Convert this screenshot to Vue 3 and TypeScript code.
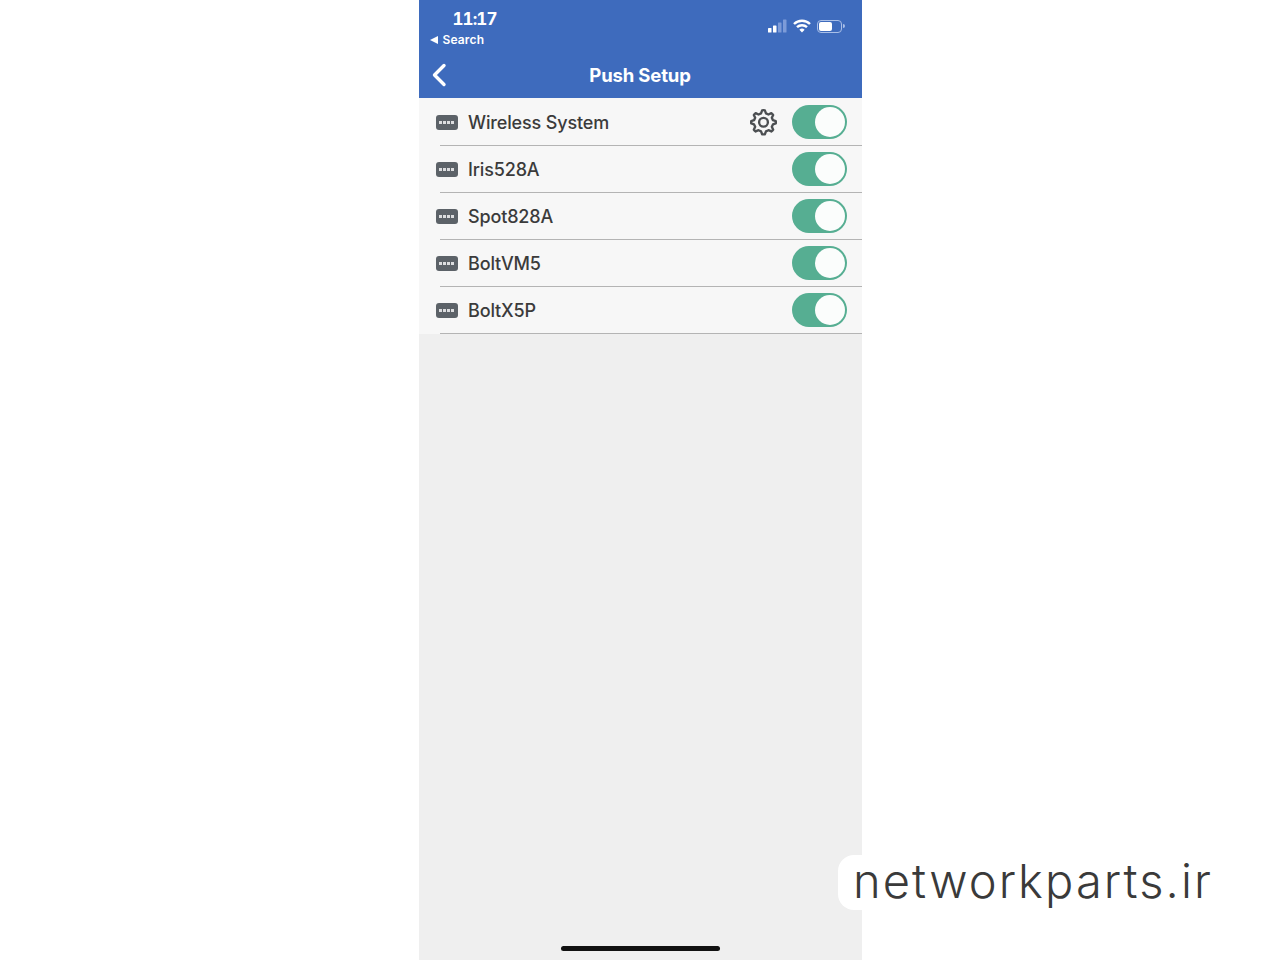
<script setup lang="ts">
import { ref } from "vue";

const devices = ref([
  { name: "Wireless System", gear: true },
  { name: "Iris528A", gear: false },
  { name: "Spot828A", gear: false },
  { name: "BoltVM5", gear: false },
  { name: "BoltX5P", gear: false },
]);

const gearPath =
  "M10.8 1.6 Q12 1.2 13.2 1.6 L14.2 4.3 L16.4 5.3 L19 4.1 Q20 4.8 20.6 5.8 L19.4 8.2 L20.4 10.4 L22.9 11.2 Q23.1 12.4 22.9 13.3 L20.4 14.2 L19.4 16.3 L20.6 18.8 Q20 19.8 19 20.4 L16.4 19.3 L14.2 20.3 L13.2 22.9 Q12 23.2 10.8 22.9 L9.8 20.3 L7.6 19.3 L5 20.4 Q4 19.8 3.4 18.8 L4.6 16.3 L3.6 14.2 L1.1 13.3 Q0.9 12.4 1.1 11.2 L3.6 10.4 L4.6 8.2 L3.4 5.8 Q4 4.8 5 4.1 L7.6 5.3 L9.8 4.3 Z";
</script>

<template>
  <div class="page">
    <div class="phone">
      <header class="header">
        <div class="status">
          <div class="status-left">
            <div class="time">11:17</div>
            <div class="back-app"><span class="back-tri"></span>Search</div>
          </div>
          <div class="status-right">
            <svg class="signal" width="20" height="14" viewBox="0 0 20 14">
              <rect x="0" y="9" width="3.5" height="4.5" rx="0.6" fill="#fff" />
              <rect x="5" y="6.5" width="3.5" height="7" rx="0.6" fill="#fff" />
              <rect x="10" y="3.5" width="3.5" height="10" rx="0.6" fill="#7d9bd8" />
              <rect x="15" y="0.5" width="3.5" height="13" rx="0.6" fill="#7d9bd8" />
            </svg>
            <svg class="wifi" width="18" height="14" viewBox="0 0 18 14">
              <path d="M1 5 A11.5 11.5 0 0 1 17 5" fill="none" stroke="#fff" stroke-width="2.4" />
              <path d="M4 8.2 A7.2 7.2 0 0 1 14 8.2" fill="none" stroke="#fff" stroke-width="2.4" />
              <path d="M6.4 10.8 L9 13.6 L11.6 10.8 A3.8 3.8 0 0 0 6.4 10.8 Z" fill="#fff" />
            </svg>
            <div class="battery">
              <div class="battery-body"><div class="battery-level"></div></div>
              <div class="battery-cap"></div>
            </div>
          </div>
        </div>
        <div class="nav">
          <svg class="chevron" width="16" height="24" viewBox="0 0 16 24">
            <path d="M13 2.5 L3.5 12 L13 21.5" fill="none" stroke="#fff" stroke-width="3.4" stroke-linecap="round" stroke-linejoin="round" />
          </svg>
          <div class="title">Push Setup</div>
        </div>
      </header>

      <ul class="list">
        <li v-for="item in devices" :key="item.name" class="row">
          <div class="row-main">
            <div class="device-icon">
              <span v-for="n in 4" :key="n" class="dot"></span>
            </div>
            <span class="name">{{ item.name }}</span>
            <svg v-if="item.gear" class="gear" width="27" height="28" viewBox="0 0 24 24">
              <path :d="gearPath" fill="none" stroke="#4c4f52" stroke-width="2.1" stroke-linejoin="round" />
              <circle cx="12" cy="12.2" r="3.9" fill="none" stroke="#4c4f52" stroke-width="2.1" />
            </svg>
            <div class="switch"><div class="knob"></div></div>
          </div>
          <div class="divider"></div>
        </li>
      </ul>

      <div class="home-bar"></div>
    </div>

    <div class="watermark">networkparts.ir</div>
  </div>
</template>

<style>
html,
body {
  margin: 0;
  background: #fff;
}
</style>

<style scoped>
.page {
  position: relative;
  height: 960px;
  overflow: hidden;
  display: flex;
  justify-content: center;
  font-family: "Inter", "Liberation Sans", sans-serif;
}
.phone {
  position: relative;
  width: 443px;
  height: 960px;
  background: #efefef;
  display: flex;
  flex-direction: column;
}
.header {
  height: 98px;
  background: #3e6bbd;
  color: #fff;
  flex-shrink: 0;
}
.status {
  height: 50px;
  display: flex;
  justify-content: space-between;
}
.status-left {
  padding: 9px 0 0 11px;
}
.time {
  font-size: 17px;
  font-weight: 700;
  line-height: 20px;
  margin-left: 23px;
  letter-spacing: -0.9px;
  font-variant-numeric: tabular-nums;
}
.back-app {
  display: flex;
  align-items: center;
  font-size: 12px;
  font-weight: 600;
  line-height: 16px;
  margin-top: 3px;
  letter-spacing: 0.15px;
}
.back-tri {
  width: 0;
  height: 0;
  border-top: 4px solid transparent;
  border-bottom: 4px solid transparent;
  border-right: 8px solid #fff;
  margin-right: 5px;
}
.status-right {
  display: flex;
  align-items: flex-start;
  padding: 19px 17px 0 0;
}
.signal {
  margin-right: 5px;
}
.wifi {
  margin-right: 6px;
}
.battery {
  display: flex;
  align-items: center;
  height: 14px;
}
.battery-body {
  width: 25px;
  height: 13px;
  border: 1px solid #a9bfe8;
  border-radius: 4px;
  padding: 1px;
  box-sizing: border-box;
  margin-right: 1px;
}
.battery-level {
  width: 13px;
  height: 100%;
  background: #fff;
  border-radius: 2px;
}
.battery-cap {
  width: 2px;
  height: 4px;
  background: #a9bfe8;
  border-radius: 0 2px 2px 0;
}
.nav {
  position: relative;
  height: 48px;
  box-sizing: border-box;
  padding-top: 2px;
  display: flex;
  align-items: center;
  justify-content: center;
}
.chevron {
  position: absolute;
  left: 12px;
  top: 13px;
}
.title {
  font-size: 18.5px;
  font-weight: 700;
  letter-spacing: -0.15px;
}
.list {
  list-style: none;
  margin: 0;
  padding: 1px 0 0;
  background: #f7f7f7;
}
.row {
  height: 47px;
  display: flex;
  flex-direction: column;
}
.row-main {
  height: 46px;
  display: flex;
  align-items: center;
  padding: 0 15px 0 17px;
}
.divider {
  height: 1px;
  margin-left: 21px;
  background: #b4b4b4;
}
.device-icon {
  width: 22px;
  height: 15px;
  background: #5c6268;
  border-radius: 3px;
  display: flex;
  align-items: center;
  justify-content: center;
  gap: 1.5px;
  flex-shrink: 0;
}
.dot {
  width: 2.5px;
  height: 3px;
  background: #dcdddf;
}
.name {
  flex: 1;
  margin-left: 10.5px;
  font-size: 18px;
  font-weight: 500;
  color: #3b3b3b;
  letter-spacing: -0.15px;
}
.gear {
  margin-right: 15px;
}
.switch {
  width: 55px;
  height: 34px;
  background: #56ae92;
  border-radius: 17px;
  padding: 2px;
  box-sizing: border-box;
  display: flex;
  justify-content: flex-end;
}
.knob {
  width: 30px;
  height: 30px;
  background: #fbfdfc;
  border-radius: 50%;
}
.home-bar {
  position: absolute;
  left: 142px;
  bottom: 9px;
  width: 159px;
  height: 5px;
  background: #111;
  border-radius: 3px;
}
.watermark {
  position: absolute;
  left: 838px;
  top: 855px;
  width: 392px;
  height: 55px;
  box-sizing: border-box;
  background: #fff;
  border-radius: 16px 0 0 16px;
  padding-left: 15px;
  font-family: "Inter", "Liberation Sans", sans-serif;
  font-size: 47px;
  font-weight: 300;
  line-height: 52px;
  letter-spacing: 2.1px;
  color: #3a3a3a;
  white-space: nowrap;
}
</style>
